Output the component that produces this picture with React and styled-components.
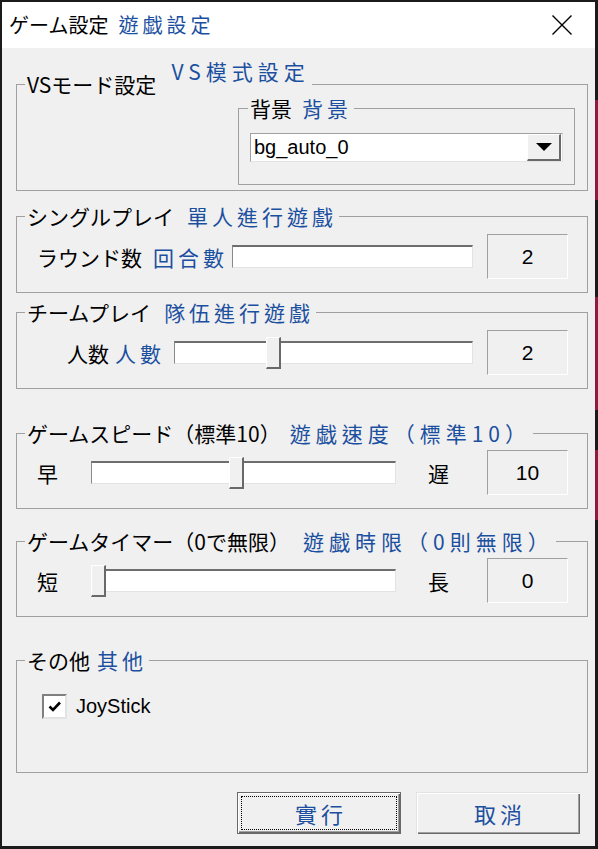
import React from 'react'
import styled, { createGlobalStyle } from 'styled-components'

const GlobalStyle = createGlobalStyle`
  html, body {
    margin: 0;
    padding: 0;
  }
  body {
    width: 598px;
    height: 849px;
    overflow: hidden;
    background:
      linear-gradient(
        to bottom,
        #1b1b1b 0 100px,
        #8c1d3f 100px 200px,
        #1b1b1b 200px 297px,
        #8c1d3f 297px 410px,
        #1b1b1b 410px 450px,
        #8c1d3f 450px 520px,
        #1b1b1b 520px
      ) right top / 3px 100% no-repeat,
      #1b1b1b;
    font-family: "Noto Sans CJK JP", sans-serif;
  }
`

const Window = styled.div`
  width: 593px;
  height: 844px;
  margin: 2px 0 0 2px;
  background: #f0f0f0;
  display: flex;
  flex-direction: column;
`

const TitleBar = styled.div`
  height: 46px;
  flex: none;
  background: #fff;
  display: flex;
  align-items: center;
  justify-content: space-between;
  padding: 0 23px 0 7px;
`

const TitleText = styled.div`
  font-size: 20px;
  line-height: 24px;
  color: #000;
  white-space: nowrap;
`

const Blue = styled.span`
  font-family: "Noto Sans CJK TC", "Noto Sans CJK JP", sans-serif;
  color: #1b4f9f;
  letter-spacing: ${p => (p.$ls ?? 4)}px;
  margin-left: ${p => p.$gap || 0}px;
`

const Raised = styled(Blue)`
  display: inline-block;
  transform: translateY(-13px);
`

const Body = styled.div`
  padding: 24px 7px 0 14px;
  display: flex;
  flex-direction: column;
`

const Group = styled.fieldset`
  margin: ${p => p.$mt || 0}px 0 0 ${p => p.$ml || 0}px;
  padding: 0 ${p => p.$pr ?? 19}px ${p => p.$pb ?? 13}px ${p => p.$pl ?? 8}px;
  border: 1px solid #a0a0a0;
  min-width: 0;
`

const Legend = styled.legend`
  padding: 0 2px;
  margin-left: ${p => p.$ml || 0}px;
  font-size: 21px;
  line-height: 24px;
  color: #000;
  white-space: nowrap;
`

const Row = styled.div`
  display: flex;
  align-items: center;
  height: ${p => p.$h || 45}px;
  margin-top: ${p => p.$mt || 0}px;
  padding-left: ${p => p.$pl || 0}px;
`

const RowLabel = styled.div`
  flex: none;
  box-sizing: border-box;
  width: ${p => p.$w}px;
  padding-left: ${p => p.$pl || 0}px;
  font-size: 21px;
  line-height: 24px;
  color: #000;
  white-space: nowrap;
`

const Track = styled.div`
  position: relative;
  flex: 1;
  height: 23px;
  box-sizing: border-box;
  background: #fff;
  border-top: 2px solid #6e6e6e;
  border-left: 1px solid #8a8a8a;
  border-right: 1px solid #e3e3e3;
  border-bottom: 1px solid #e3e3e3;
  margin: 0 ${p => p.$mr || 0}px 0 ${p => p.$ml || 0}px;
`

const Thumb = styled.div`
  position: absolute;
  top: -6px;
  left: ${p => p.$at}px;
  width: 15px;
  height: 32px;
  box-sizing: border-box;
  background: #f0f0f0;
  border-top: 1px solid #fff;
  border-left: 1px solid #fff;
  border-right: 2px solid #696969;
  border-bottom: 2px solid #696969;
`

const ValueBox = styled.div`
  flex: none;
  width: 81px;
  height: 45px;
  box-sizing: border-box;
  border: 1px solid;
  border-color: #a0a0a0 #fff #fff #a0a0a0;
  display: flex;
  align-items: center;
  justify-content: center;
  font-family: "Liberation Sans", Arial, sans-serif;
  font-size: 21px;
  color: #000;
`

const Combo = styled.div`
  margin-top: 13px;
  height: 29px;
  box-sizing: border-box;
  display: flex;
  align-items: center;
  background: #fff;
  border: 1px solid;
  border-color: #a0a0a0 #e3e3e3 #e3e3e3 #a0a0a0;
`

const ComboText = styled.div`
  flex: 1;
  padding-left: 3px;
  font-family: "Liberation Sans", Arial, sans-serif;
  font-size: 20px;
  line-height: 27px;
  color: #000;
`

const ComboButton = styled.div`
  width: 34px;
  height: 27px;
  margin-right: 1px;
  box-sizing: border-box;
  background: #f0f0f0;
  border-style: solid;
  border-width: 1px 2px 2px 1px;
  border-color: #fff #696969 #696969 #fff;
  display: flex;
  align-items: center;
  justify-content: center;
`

const Checkbox = styled.span`
  flex: none;
  width: 25px;
  height: 25px;
  box-sizing: border-box;
  border: 2px solid;
  border-color: #808080 #e3e3e3 #e3e3e3 #808080;
  background: #fff;
  display: flex;
  align-items: center;
  justify-content: center;
`

const CheckLabel = styled.span`
  margin-left: 9px;
  font-family: "Liberation Sans", Arial, sans-serif;
  font-size: 20px;
  color: #000;
`

const ButtonRow = styled.div`
  display: flex;
  justify-content: flex-end;
  gap: 15px;
  margin: 19px 8px 0 0;
`

const Button = styled.button`
  width: 164px;
  height: 42px;
  padding: 0 0 0 4px;
  background: #f0f0f0;
  font-family: "Noto Sans CJK TC", "Noto Sans CJK JP", sans-serif;
  font-size: 22px;
  letter-spacing: 4px;
  color: #1b4f9f;
  border: ${p => (p.$default ? '1px solid #696969' : 'none')};
  box-shadow: ${p =>
    p.$default
      ? 'inset 1px 1px 0 #fff, inset -1px -1px 0 #696969, inset -2px -2px 0 #a0a0a0'
      : 'inset 1px 1px 0 #e3e3e3, inset 2px 2px 0 #fff, inset -1px -1px 0 #696969, inset -2px -2px 0 #a0a0a0'};
  outline: ${p => (p.$default ? '1px dotted #000' : 'none')};
  outline-offset: -5px;
`

const Slider = ({ at }) => (
  <Track>{at !== undefined && <Thumb $at={at} />}</Track>
)

export default function App() {
  return (
    <>
      <GlobalStyle />
      <Window>
        <TitleBar>
          <TitleText>
            ゲーム設定<Blue $gap={10}>遊戯設定</Blue>
          </TitleText>
          <svg width="20" height="20" viewBox="0 0 20 20">
            <path d="M0.5 0.5 L19.5 19.5 M19.5 0.5 L0.5 19.5" stroke="#000" strokeWidth="1.4" fill="none" />
          </svg>
        </TitleBar>
        <Body>
          <Group $pr={12} $pb={5}>
            <Legend>
              VSモード設定<Raised $gap={15} $ls={5}>VS模式設定</Raised>
            </Legend>
            <Group $ml={213} $pl={11} $pr={11} $pb={22}>
              <Legend $ml={-2}>
                背景<Blue $gap={10}>背景</Blue>
              </Legend>
              <Combo>
                <ComboText>bg_auto_0</ComboText>
                <ComboButton>
                  <svg width="16" height="8" viewBox="0 0 16 8">
                    <path d="M0 0 H16 L8 8 Z" fill="#000" />
                  </svg>
                </ComboButton>
              </Combo>
            </Group>
          </Group>

          <Group $mt={13}>
            <Legend>
              シングルプレイ<Blue $gap={13}>單人進行遊戲</Blue>
            </Legend>
            <Row $mt={6}>
              <RowLabel $w={200} $pl={12}>
                ラウンド数<Blue $gap={11}>回合數</Blue>
              </RowLabel>
              <Track $ml={7} $mr={14} />
              <ValueBox>2</ValueBox>
            </Row>
          </Group>

          <Group $mt={7}>
            <Legend>
              チームプレイ<Blue $gap={13}>隊伍進行遊戲</Blue>
            </Legend>
            <Row $mt={6}>
              <RowLabel $w={142} $pl={42}>
                人数<Blue $gap={6}>人數</Blue>
              </RowLabel>
              <Track $ml={7} $mr={14}>
                <Thumb $at={91} />
              </Track>
              <ValueBox>2</ValueBox>
            </Row>
          </Group>

          <Group $mt={32}>
            <Legend>
              ゲームスピード（標準10）<Blue $gap={9} $ls={5}>遊戯速度（標準10）</Blue>
            </Legend>
            <Row $mt={5}>
              <RowLabel $w={66} $pl={12}>早</RowLabel>
              <Slider at={137} />
              <RowLabel $w={91} $pl={32}>遅</RowLabel>
              <ValueBox>10</ValueBox>
            </Row>
          </Group>

          <Group $mt={20}>
            <Legend>
              ゲームタイマー（0で無限）<Blue $gap={13} $ls={5}>遊戯時限（0則無限）</Blue>
            </Legend>
            <Row $mt={5}>
              <RowLabel $w={66} $pl={12}>短</RowLabel>
              <Slider at={-1} />
              <RowLabel $w={91} $pl={32}>長</RowLabel>
              <ValueBox>0</ValueBox>
            </Row>
          </Group>

          <Group $mt={31} $pb={53}>
            <Legend>
              その他<Blue $gap={7}>其他</Blue>
            </Legend>
            <Row $mt={22} $h={25} $pl={17}>
              <Checkbox>
                <svg width="14" height="12" viewBox="0 0 14 12">
                  <path d="M1.5 5.5 L5 9 L12 1.5" stroke="#000" strokeWidth="2.6" fill="none" />
                </svg>
              </Checkbox>
              <CheckLabel>JoyStick</CheckLabel>
            </Row>
          </Group>

          <ButtonRow>
            <Button $default>實行</Button>
            <Button>取消</Button>
          </ButtonRow>
        </Body>
      </Window>
    </>
  )
}
